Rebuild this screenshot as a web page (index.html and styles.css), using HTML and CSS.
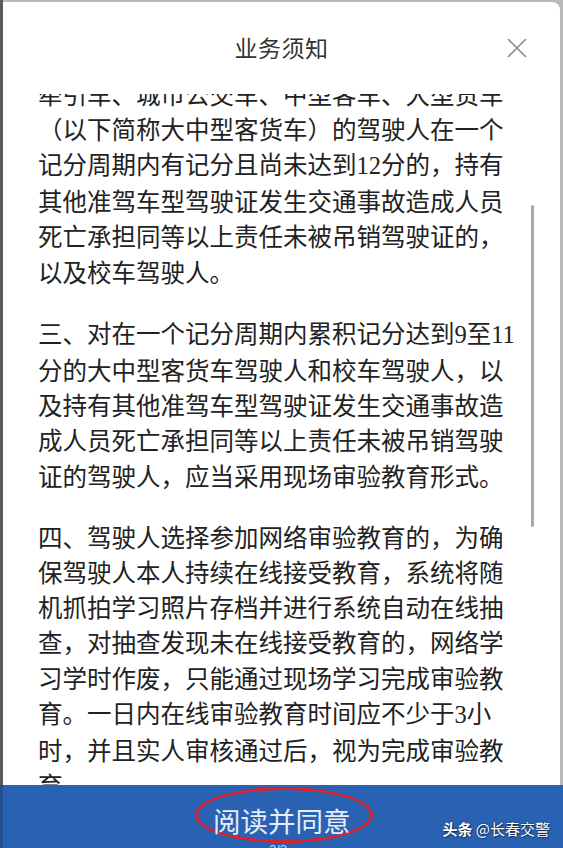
FILE: index.html
```html
<!DOCTYPE html>
<html lang="zh-CN">
<head>
<meta charset="utf-8">
<title>业务须知</title>
<link rel="stylesheet" href="styles.css">
</head>
<body>
<div class="screen">
  <div class="panel">
    <div class="header">
      <span class="spacer"></span>
      <h1 class="title">业务须知</h1>
      <span class="close" aria-label="关闭">
        <svg viewBox="0 0 20 20" width="20" height="20"><path d="M1.5 1.5 L18.5 18.5 M18.5 1.5 L1.5 18.5" stroke="#8e8e8e" stroke-width="1.6" fill="none" stroke-linecap="round"/></svg>
      </span>
    </div>
    <div class="body">
      <div class="content">
        <p class="para">牵引车、城市公交车、中型客车、大型货车<br>（以下简称大中型客货车）的驾驶人在一个<br>记分周期内有记分且尚未达到<span class="num">12</span>分的，持有<br>其他准驾车型驾驶证发生交通事故造成人员<br>死亡承担同等以上责任未被吊销驾驶证的，<br>以及校车驾驶人。</p>
        <p class="para">三、对在一个记分周期内累积记分达到<span class="num">9</span>至<span class="num">11</span><br>分的大中型客货车驾驶人和校车驾驶人，以<br>及持有其他准驾车型驾驶证发生交通事故造<br>成人员死亡承担同等以上责任未被吊销驾驶<br>证的驾驶人，应当采用现场审验教育形式。</p>
        <p class="para">四、驾驶人选择参加网络审验教育的，为确<br>保驾驶人本人持续在线接受教育，系统将随<br>机抓拍学习照片存档并进行系统自动在线抽<br>查，对抽查发现未在线接受教育的，网络学<br>习学时作废，只能通过现场学习完成审验教<br>育。一日内在线审验教育时间应不少于<span class="num">3</span>小<br>时，并且实人审核通过后，视为完成审验教<br>育。</p>
      </div>
      <div class="scrollbar"></div>
    </div>
  </div>
  <div class="bar">
    <span class="agree">阅读并同意</span>
    <span class="pager">3/3</span>
    <span class="watermark"><b>头条</b> @长春交警</span>
  </div>
</div>
</body>
</html>
```

FILE: styles.css
```css
html, body {
  margin: 0;
  padding: 0;
}
body {
  width: 563px;
  height: 848px;
  overflow: hidden;
  background: #8a8a8a;
  font-family: "Noto Sans CJK SC", "Noto Sans", sans-serif;
}
.screen {
  height: 848px;
  display: flex;
  flex-direction: column;
  background: linear-gradient(90deg, #5a5a5a 0, #5a5a5a 3px, #b9b9b9 3px);
}
.panel {
  flex: 1;
  min-height: 0;
  margin: 2px 3px 0 3px;
  background: #fff;
  border-top-right-radius: 8px;
  display: flex;
  flex-direction: column;
  overflow: hidden;
}
.header {
  height: 92px;
  box-sizing: border-box;
  padding-top: 34px;
  display: grid;
  grid-template-columns: 1fr auto 1fr;
  grid-template-rows: 23px;
  align-content: start;
  align-items: center;
  flex-shrink: 0;
}
.title {
  margin: 0;
  font-size: 23px;
  line-height: 23px;
  font-weight: 400;
  color: #333;
  letter-spacing: 0.5px;
}
.close {
  justify-self: end;
  margin-right: 33px;
  width: 20px;
  height: 20px;
  display: flex;
}
.body {
  flex: 1;
  min-height: 0;
  overflow: hidden;
  position: relative;
}
.content {
  margin-top: -18.5px;
  padding: 0 20px 0 35px;
  color: #222;
  font-size: 24.5px;
  line-height: 35.2px;
  white-space: nowrap;
}
.para {
  margin: 0 0 26px 0;
}
.num {
  font-family: "Liberation Serif", serif;
}
.scrollbar {
  position: absolute;
  top: 111px;
  right: 26px;
  width: 3px;
  height: 322px;
  border-radius: 2px;
  background: #a9a9a9;
}
.bar {
  height: 63px;
  flex-shrink: 0;
  background: #2a62b3;
  border-left: 3px solid #234f90;
  display: flex;
  flex-direction: column;
  align-items: center;
  overflow: hidden;
  position: relative;
}
.agree {
  margin-top: 2px;
  margin-left: 2px;
  box-sizing: border-box;
  width: 178px;
  height: 56px;
  padding: 17px 20px 0 15px;
  border: 3px solid #d8222c;
  border-radius: 50%;
  color: #e4edf8;
  font-size: 27.5px;
  line-height: 27.5px;
  white-space: nowrap;
  flex-shrink: 0;
}
.pager {
  margin-left: -10px;
  color: #cfdcef;
  font-size: 13px;
  line-height: 14px;
  font-family: "Liberation Sans", sans-serif;
}
.watermark {
  position: absolute;
  right: 13px;
  top: 35px;
  color: #fff;
  font-size: 15px;
  line-height: 18px;
  white-space: nowrap;
  text-shadow: 0 0 2px rgba(0, 0, 0, 0.6), 1px 1px 1px rgba(0, 0, 0, 0.4);
}
.watermark b {
  font-weight: 700;
}
```
